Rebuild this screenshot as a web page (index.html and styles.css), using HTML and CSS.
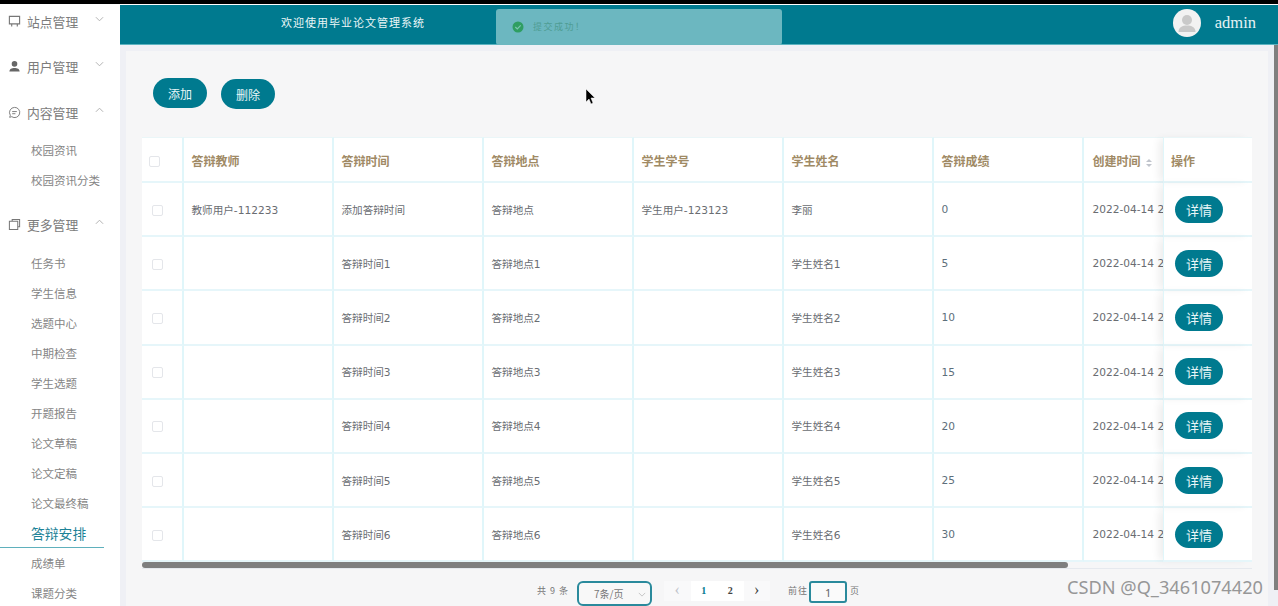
FILE: index.html
```html
<!DOCTYPE html>
<html lang="zh">
<head>
<meta charset="utf-8">
<title>答辩安排</title>
<link rel="stylesheet" href="styles.css">
</head>
<body>
<div class="topbar"></div>
<div class="app">
  <aside class="sidebar">
    <div class="menu first">
      <svg class="micon" viewBox="0 0 14 14"><path d="M1.500 1.500h11v8h-11zM4 9.500v3M10 9.500v3" fill="none" stroke="#777" stroke-width="1.200"/></svg>
      <span>站点管理</span><svg class="chev" viewBox="0 0 10 6"><path d="M1 1l4 4 4-4" fill="none" stroke="#aaa"/></svg>
    </div>
    <div class="menu">
      <svg class="micon" viewBox="0 0 14 14"><circle cx="7" cy="4.200" r="3" fill="#666"/><path d="M1.500 12.500c0-3 2.500-4 5.500-4s5.500 1 5.500 4z" fill="#666"/></svg>
      <span>用户管理</span><svg class="chev" viewBox="0 0 10 6"><path d="M1 1l4 4 4-4" fill="none" stroke="#aaa"/></svg>
    </div>
    <div class="menu low-a">
      <svg class="micon" viewBox="0 0 14 14"><path d="M7 1.500a5.500 5.500 0 1 1-3 10l-2.200.7.700-2.200A5.500 5.500 0 0 1 7 1.500zM4.500 6h5M4.500 8.300h3.500" fill="none" stroke="#777"/></svg>
      <span>内容管理</span><svg class="chev" viewBox="0 0 10 6"><path d="M1 5l4-4 4 4" fill="none" stroke="#aaa"/></svg>
    </div>
    <ul class="sub">
      <li>校园资讯</li>
      <li>校园资讯分类</li>
    </ul>
    <div class="menu gap">
      <svg class="micon" viewBox="0 0 14 14"><path d="M4.500 3.500V1.500h8v8h-2M1.500 3.500h9v9h-9z" fill="none" stroke="#777" stroke-width="1.100"/></svg>
      <span>更多管理</span><svg class="chev" viewBox="0 0 10 6"><path d="M1 5l4-4 4 4" fill="none" stroke="#aaa"/></svg>
    </div>
    <ul class="sub more">
      <li>任务书</li>
      <li>学生信息</li>
      <li>选题中心</li>
      <li>中期检查</li>
      <li>学生选题</li>
      <li>开题报告</li>
      <li>论文草稿</li>
      <li>论文定稿</li>
      <li>论文最终稿</li>
      <li class="active">答辩安排</li>
      <li>成绩单</li>
      <li>课题分类</li>
    </ul>
  </aside>
  <div class="main">
    <header class="header">
      <div class="site-title">欢迎使用毕业论文管理系统</div>
      <div class="user">
        <div class="avatar"><svg viewBox="0 0 28 28"><circle cx="14" cy="11" r="5" fill="#c9c9c9"/><path d="M5.500 23c0-5 4-6.500 8.500-6.500s8.500 1.500 8.500 6.500z" fill="#c9c9c9"/></svg></div>
        <span class="uname">admin</span>
      </div>
    </header>
    <div class="body-row">
      <main class="panel">
        <div class="actions">
          <button class="btn">添加</button>
          <button class="btn low">删除</button>
        </div>
        <table class="grid">
          <colgroup>
            <col class="c-check"><col class="c-w"><col class="c-w"><col class="c-w"><col class="c-w"><col class="c-w"><col class="c-w"><col class="c-date"><col class="c-op">
          </colgroup>
          <thead>
            <tr>
              <th class="chk"><i class="box head-box"></i></th>
              <th>答辩教师</th><th>答辩时间</th><th>答辩地点</th><th>学生学号</th><th>学生姓名</th><th>答辩成绩</th>
              <th class="date-h">创建时间<i class="sort"></i></th>
              <th class="fix">操作</th>
            </tr>
          </thead>
          <tbody>
            <tr><td class="chk"><i class="box"></i></td><td>教师用户-112233</td><td>添加答辩时间</td><td>答辩地点</td><td>学生用户-123123</td><td>李丽</td><td class="num">0</td><td class="date">2022-04-14 21:30:00</td><td class="fix"><button class="btn small">详情</button></td></tr>
            <tr><td class="chk"><i class="box"></i></td><td></td><td>答辩时间1</td><td>答辩地点1</td><td></td><td>学生姓名1</td><td class="num">5</td><td class="date">2022-04-14 21:30:00</td><td class="fix"><button class="btn small">详情</button></td></tr>
            <tr><td class="chk"><i class="box"></i></td><td></td><td>答辩时间2</td><td>答辩地点2</td><td></td><td>学生姓名2</td><td class="num">10</td><td class="date">2022-04-14 21:30:00</td><td class="fix"><button class="btn small">详情</button></td></tr>
            <tr><td class="chk"><i class="box"></i></td><td></td><td>答辩时间3</td><td>答辩地点3</td><td></td><td>学生姓名3</td><td class="num">15</td><td class="date">2022-04-14 21:30:00</td><td class="fix"><button class="btn small">详情</button></td></tr>
            <tr><td class="chk"><i class="box"></i></td><td></td><td>答辩时间4</td><td>答辩地点4</td><td></td><td>学生姓名4</td><td class="num">20</td><td class="date">2022-04-14 21:30:00</td><td class="fix"><button class="btn small">详情</button></td></tr>
            <tr><td class="chk"><i class="box"></i></td><td></td><td>答辩时间5</td><td>答辩地点5</td><td></td><td>学生姓名5</td><td class="num">25</td><td class="date">2022-04-14 21:30:00</td><td class="fix"><button class="btn small">详情</button></td></tr>
            <tr><td class="chk"><i class="box"></i></td><td></td><td>答辩时间6</td><td>答辩地点6</td><td></td><td>学生姓名6</td><td class="num">30</td><td class="date">2022-04-14 21:30:00</td><td class="fix"><button class="btn small">详情</button></td></tr>
          </tbody>
        </table>
        <div class="hscroll"><div class="thumb"></div></div>
        <div class="pager">
          <span class="total">共 9 条</span>
          <div class="size">7条/页<svg class="size-arrow" viewBox="0 0 10 6"><path d="M1 1l4 4 4-4" fill="none" stroke="#bbb"/></svg></div>
          <div class="pages">
            <span class="pg off">‹</span><span class="pg cur">1</span><span class="pg">2</span><span class="pg nav">›</span>
          </div>
          <span class="goto">前往</span>
          <div class="jump">1</div>
          <span class="goto-end">页</span>
        </div>
      </main>
      <div class="vscroll"></div>
    </div>
  </div>
</div>
<div class="toast">
  <svg class="toast-icon" viewBox="0 0 12 12"><circle cx="6" cy="6" r="5.500" fill="#2f9e62"/><path d="M3.300 6l2 2 3.400-3.600" fill="none" stroke="#7cc6b0" stroke-width="1.200"/></svg>
  <span>提交成功！</span>
</div>
<svg class="cursor" viewBox="0 0 10 16"><path d="M1 0v13l3-3 2 5 2-1-2-5h4z" fill="#000" stroke="#fff" stroke-width=".5"/></svg>
<div class="watermark">CSDN @Q_3461074420</div>
</body>
</html>
```
FILE: styles.css
```css
* { box-sizing: border-box; }
html, body { margin: 0; padding: 0; height: 606px; overflow: hidden; }
body {
  background: #fff;
  font-family: "Noto Sans CJK SC", "Noto Sans", sans-serif;
  color: #606266;
  display: flex;
  flex-direction: column;
}
.topbar { height: 4px; background: #000; flex: none; }
.app { flex: 1; display: flex; min-height: 0; padding-top: 1px; }

.sidebar { width: 120px; flex: none; overflow: hidden; background: #fff; }
.menu { height: 45px; display: flex; align-items: center; padding-left: 8px; font-size: 12.800px; color: #7c7c7c; }
.menu.first { margin-top: -6px; }
.menu.low-a { margin-top: 1px; }
.menu.gap { margin-top: 7px; }
.micon { width: 13px; height: 13px; margin-right: 6px; flex: none; }
.chev { width: 9px; height: 6px; margin-left: 17px; margin-top: -6px; flex: none; }
.sub { list-style: none; margin: 0; padding: 0; }
.sub.more { padding-top: 1px; }
.sub li { height: 30px; line-height: 30px; padding-left: 31px; font-size: 11.500px; color: #858585; }
.sub li.active { width: 104px; color: #1d8397; font-size: 13.800px; border-bottom: 1px solid #5fb0bc; }

.main { flex: 1; min-width: 0; display: flex; flex-direction: column; background: #eff0f5; }
.header {
  height: 40px; flex: none; background: #007a8f; border-bottom: 1px solid #5cb3c0;
  display: flex; align-items: center; justify-content: space-between;
  padding: 0 22px 3px 161px;
}
.site-title { font-size: 11px; letter-spacing: 1px; color: #eaf6f7; margin-top: -2px; }
.user { display: flex; align-items: center; gap: 14px; }
.avatar { width: 28px; height: 28px; border-radius: 50%; background: #f2f2f2; overflow: hidden; }
.avatar svg { display: block; width: 28px; height: 28px; }
.uname { font-family: "Liberation Serif", serif; font-size: 16.500px; color: #e6f3f5; }

.body-row { flex: 1; min-height: 0; display: flex; }
.panel { flex: none; width: 1142px; margin: 6px 6px 0 6px; background: #f6f6f7; padding: 27px 0 0 16px; overflow: hidden; }
.vscroll { width: 4px; flex: none; height: 545px; background: #7f7f7f; }

.actions { display: flex; align-items: flex-start; gap: 14px; padding-left: 11px; height: 31px; }
.btn { border: 0; margin: 0; padding: 0; width: 54px; height: 30px; border-radius: 15px; background: #007a8f; color: #e8f6f8; font: 12px "Noto Sans CJK SC", sans-serif; }
.btn.low { margin-top: 1px; }
.btn.small { width: 48px; height: 27px; border-radius: 14px; font-size: 13px; display: block; }

.grid { width: 1110px; margin-top: 28px; table-layout: fixed; border-collapse: separate; border-spacing: 0; background: #fff; }
.c-check { width: 41.500px; }
.c-w { width: 150px; }
.c-date { width: 79.500px; }
.c-op { width: 89px; }
.grid th, .grid td {
  padding: 0 0 0 8px; text-align: left; white-space: nowrap; overflow: hidden;
  border-right: 2px solid #e0f6fa; border-bottom: 2px solid #e6f6fa;
}
.grid th { height: 46px; padding-top: 2px; font-size: 12px; font-weight: 700; color: #a08a65; border-top: 1px solid #eaf6f8; }
.grid td { height: 54.200px; font-family: "DejaVu Sans", "Noto Sans CJK SC", sans-serif; font-size: 10.600px; color: #6a6d72; }
.grid th.chk, .grid td.chk { padding: 0; }
.box { display: block; width: 11px; height: 11px; border: 1px solid #e4e6ea; border-radius: 2px; background: #fff; margin: 2px 0 0 10px; }
.head-box { margin: 3px 0 0 7px; }
.grid td.num { color: #5d6f7c; }
.grid th.date-h { padding-left: 9px; border-right: 0; }
.grid td.date { padding-left: 9px; border-right: 0; }
.sort { display: inline-flex; flex-direction: column; gap: 2px; vertical-align: middle; margin-left: 5px; }
.sort::before, .sort::after { content: ""; display: block; width: 0; height: 0; border-left: 3.500px solid transparent; border-right: 3.500px solid transparent; }
.sort::before { border-bottom: 3.500px solid #c0c4cc; }
.sort::after { border-top: 3.500px solid #c0c4cc; }
.grid .fix { padding-left: 11px; border-right: 0; border-left: 1px solid #e0f6fa; box-shadow: -6px 0 8px -2px rgba(0,0,0,.07); position: relative; }
.grid th.fix { padding-left: 7px; }

.hscroll { width: 1110px; height: 7px; border-bottom: 1px solid #e6e9ee; }
.thumb { width: 926px; height: 6px; border-radius: 3px; background: #7f7f7f; }

.pager { display: flex; align-items: flex-start; margin-top: 12px; padding-left: 395px; font-size: 9px; color: #777; }
.total { margin: 3px 8px 0 0; letter-spacing: 1px; }
.size { position: relative; width: 75px; height: 25px; border: 2px solid #2a8a9c; border-radius: 6px; background: #f8f8f8; font-size: 10px; line-height: 21px; padding-left: 15px; }
.size-arrow { position: absolute; right: 4px; top: 9px; width: 8px; height: 5px; }
.pages { display: flex; margin: 0 18px 0 12px; }
.pg { width: 26.500px; height: 20px; line-height: 20px; text-align: center; background: #fff; font-size: 10px; font-weight: 700; color: #444; font-family: "Liberation Serif", serif; }
.pg.cur { color: #007a8f; }
.pg.off, .pg.nav { font-size: 16px; font-weight: 400; line-height: 17px; background: #f9f9fa; }
.pg.off { color: #c0c4cc; }
.goto { margin-top: 3px; letter-spacing: 1px; width: 21px; }
.jump { width: 38px; height: 22px; border: 2px solid #2a8a9c; border-radius: 3px; background: #fafafa; text-align: center; font: 11px/19px "Noto Sans", sans-serif; color: #606266; }
.goto-end { margin: 3px 0 0 3px; }

.toast { position: absolute; left: 496px; top: 9px; width: 286px; height: 36px; background: #6cb7c0; border-radius: 3px; display: flex; align-items: center; padding: 0 0 1px 16px; font-size: 9px; letter-spacing: 1.500px; color: #4f9d94; }
.toast-icon { width: 12px; height: 12px; margin-right: 9px; }
.cursor { position: absolute; left: 585px; top: 89px; width: 10px; height: 16px; }
.watermark { position: absolute; left: 1067px; top: 575px; font: 18.200px "Noto Sans", sans-serif; color: #979797; white-space: nowrap; }
```
